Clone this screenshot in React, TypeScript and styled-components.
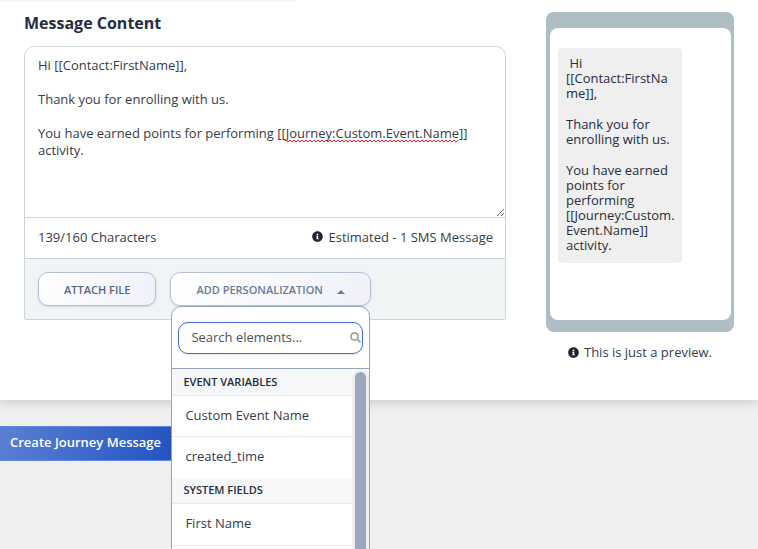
import React, { useState } from "react";
import styled, { createGlobalStyle } from "styled-components";
import { FaInfoCircle, FaSearch } from "react-icons/fa";

const GlobalStyle = createGlobalStyle`
  *, *::before, *::after { box-sizing: border-box; }
  body {
    margin: 0;
    background: #efefef;
    color: #272d3c;
    font-family: "Open Sans", sans-serif;
    font-size: 13px;
  }
  button, input, textarea { font: inherit; color: inherit; }
`;

const Page = styled.div`
  height: 100vh;
  overflow: hidden;
`;

const TopShade = styled.div`
  width: 296px;
  height: 3px;
  background: linear-gradient(#f3f3f3, #ffffff);
`;

const Panel = styled.main`
  background: #ffffff;
  box-shadow: 0 2px 10px rgba(0, 0, 0, 0.16);
`;

const Columns = styled.div`
  display: grid;
  grid-template-columns: minmax(0, 1fr) 188px;
  gap: 40px;
  padding: 9px 24px 39px;
`;

const Title = styled.label`
  display: block;
  margin-bottom: 12px;
  font-size: 16px;
  line-height: 22px;
  font-weight: 700;
`;

const Editor = styled.div`
  border: 1px solid #cbd5da;
  border-radius: 10px 10px 2px 2px;
`;

const MessageField = styled.div`
  position: relative;
  display: flex;
`;

const MessageInput = styled.textarea`
  width: 100%;
  height: 170px;
  padding: 10px 13px;
  border: 0;
  border-radius: 10px 10px 0 0;
  outline: 0;
  background: #ffffff;
  color: #363c4a;
  line-height: 17px;
  resize: vertical;
`;

const SpellingMark = styled.svg`
  position: absolute;
  left: 261px;
  top: 92px;
  pointer-events: none;
`;

const CountRow = styled.div`
  display: flex;
  justify-content: space-between;
  align-items: center;
  height: 42px;
  padding: 0 12px 3px 13px;
  border-top: 1px solid #cbd5da;
  border-bottom: 1px solid #cbd5da;
  background: #ffffff;
  color: #363c4a;
`;

const InfoNote = styled.span`
  display: flex;
  align-items: center;
  justify-content: center;
  gap: 5px;
  color: #363c4a;

  svg { color: #1f2533; }
`;

const Toolbar = styled.div`
  display: flex;
  gap: 14px;
  padding: 13px;
  background: #f0f4f5;
`;

const ToolButton = styled.button<{ $open?: boolean }>`
  display: flex;
  align-items: center;
  gap: 14px;
  height: 34px;
  padding: 0 25px;
  border: 1px solid #b4bfd6;
  border-radius: 10px;
  background: linear-gradient(110deg, #ffffff, #f0f1f9);
  box-shadow: 0 1px 2px rgba(60, 80, 120, 0.18);
  color: ${(p) => (p.$open ? "#687a98" : "#56657f")};
  font-size: 11px;
  font-weight: 600;
  text-transform: uppercase;
  cursor: pointer;
`;

const Caret = styled.svg`
  margin-top: 5px;
`;

const MenuAnchor = styled.div`
  position: relative;
`;

const Menu = styled.div`
  position: absolute;
  z-index: 2;
  top: 34px;
  left: 1px;
  width: 199px;
  border: 1px solid #98a4bb;
  border-radius: 10px;
  background: #ffffff;
  overflow: hidden;
`;

const SearchArea = styled.div`
  padding: 15px 6px 14px;
  border-bottom: 1px solid #98a4bb;
`;

const SearchBox = styled.label`
  display: flex;
  align-items: center;
  height: 32px;
  padding: 0 1px 2px 12px;
  border: 1px solid #3c6bd8;
  border-radius: 10px;
  box-shadow: 0 1px 2px rgba(60, 80, 120, 0.15);
  color: #a0a3a8;
`;

const SearchInput = styled.input`
  flex: 1;
  min-width: 0;
  padding: 0;
  border: 0;
  outline: 0;
  background: transparent;
  color: #272d3c;
  &::placeholder { color: #4b515f; opacity: 1; }
`;

const ListFrame = styled.div`
  display: flex;
  height: 300px;
`;

const List = styled.div`
  flex: 1;
  min-width: 0;
  padding-top: 1px;
  background: linear-gradient(#f5f7f9 8px, #ffffff 8px);
  overflow: hidden;
`;

const Track = styled.div`
  width: 17px;
  padding: 3px;
  border-radius: 8px 8px 0 0;
  background: #efefef;
`;

const Thumb = styled.div`
  height: 240px;
  border-radius: 6px;
  background: #9ba7bc;
`;

const Group = styled.div`
  padding-bottom: 1px;

  &:last-child { border-bottom: 1px solid #e7ebf0; }
`;

const GroupTitle = styled.div`
  padding: 0 11px 1px;
  border-bottom: 1px solid #e7ebf0;
  background: #f5f7f9;
  font-size: 11px;
  font-weight: 600;
  line-height: 24px;
`;

const Choice = styled.button`
  display: block;
  width: 100%;
  padding: 0 13px 2px;
  border: 0;
  background: #ffffff;
  color: #363c4a;
  line-height: 38px;
  text-align: left;
  cursor: pointer;

  & + & { border-top: 1px solid #e7ebf0; }
`;

const Phone = styled.div`
  height: 320px;
  padding: 16px 3px 12px 4px;
  border-radius: 8px;
  background: #afbdc5;
`;

const Screen = styled.div`
  height: 100%;
  padding: 20px 8px;
  border-radius: 8px;
  background: #ffffff;
`;

const Bubble = styled.div`
  display: flex;
  flex-direction: column;
  gap: 16px;
  width: 124px;
  padding: 8px 4px 10px 8px;
  border-radius: 4px;
  background: #efefef;
  line-height: 15px;
`;

const BubbleText = styled.p`
  margin: 0;
  white-space: pre-wrap;
  overflow-wrap: anywhere;
`;

const PreviewNote = styled(InfoNote)`
  margin-top: 11px;
  line-height: 18px;
`;

const Submit = styled.button`
  height: 35px;
  margin-top: 26px;
  padding: 0 24px 3px 10px;
  border: 1px solid #5f87e0;
  border-left: 0;
  background: linear-gradient(100deg, #5a80d2, #1f50bf);
  color: #ffffff;
  font-weight: 600;
  cursor: pointer;
`;

const INITIAL = `Hi [[Contact:FirstName]],

Thank you for enrolling with us.

You have earned points for performing [[Journey:Custom.Event.Name]] activity.`;

const GROUPS = [
  { title: "EVENT VARIABLES", items: ["Custom Event Name", "created_time"] },
  { title: "SYSTEM FIELDS", items: ["First Name"] },
];

export default function App() {
  const [message, setMessage] = useState(INITIAL);
  const [open, setOpen] = useState(true);

  return (
    <Page>
      <GlobalStyle />
      <Panel>
        <TopShade />
        <Columns>
          <section>
            <Title htmlFor="message">Message Content</Title>
            <Editor>
              <MessageField>
                <MessageInput
                  id="message"
                  spellCheck={false}
                  value={message}
                  onChange={(e) => setMessage(e.target.value)}
                />
                {message === INITIAL && (
                  <SpellingMark width="172" height="4" aria-hidden="true">
                    <defs>
                      <pattern id="wave" width="4" height="4" patternUnits="userSpaceOnUse">
                        <path d="M-2 3 L0 1 L2 3 L4 1 L6 3" fill="none" stroke="#f52020" />
                      </pattern>
                    </defs>
                    <rect width="172" height="4" fill="url(#wave)" />
                  </SpellingMark>
                )}
              </MessageField>
              <CountRow>
                <span>139/160 Characters</span>
                <InfoNote>
                  <FaInfoCircle size={11} />
                  Estimated - 1 SMS Message
                </InfoNote>
              </CountRow>
              <Toolbar>
                <ToolButton type="button">Attach File</ToolButton>
                <MenuAnchor>
                  <ToolButton type="button" $open aria-expanded={open} onClick={() => setOpen(!open)}>
                    Add Personalization
                    <Caret width="8" height="4" viewBox="0 0 8 4" aria-hidden="true">
                      <path d="M4 0 L8 4 H0 Z" fill="currentColor" />
                    </Caret>
                  </ToolButton>
                  {open && (
                    <Menu>
                      <SearchArea>
                        <SearchBox>
                          <SearchInput type="text" aria-label="Search elements" placeholder="Search elements..." />
                          <FaSearch size={11} />
                        </SearchBox>
                      </SearchArea>
                      <ListFrame>
                        <List>
                          {GROUPS.map((group) => (
                            <Group key={group.title}>
                              <GroupTitle>{group.title}</GroupTitle>
                              {group.items.map((item) => (
                                <Choice key={item} type="button">{item}</Choice>
                              ))}
                            </Group>
                          ))}
                        </List>
                        <Track>
                          <Thumb />
                        </Track>
                      </ListFrame>
                    </Menu>
                  )}
                </MenuAnchor>
              </Toolbar>
            </Editor>
          </section>
          <aside>
            <Phone>
              <Screen>
                <Bubble>
                  <BubbleText>{" Hi [[Contact:FirstName]],"}</BubbleText>
                  <BubbleText>Thank you for enrolling with us.</BubbleText>
                  <BubbleText>
                    You have earned points for performing [[Journey:Custom.Event.Name]] activity.
                  </BubbleText>
                </Bubble>
              </Screen>
            </Phone>
            <PreviewNote>
              <FaInfoCircle size={11} />
              This is just a preview.
            </PreviewNote>
          </aside>
        </Columns>
      </Panel>
      <Submit type="submit">Create Journey Message</Submit>
    </Page>
  );
}
